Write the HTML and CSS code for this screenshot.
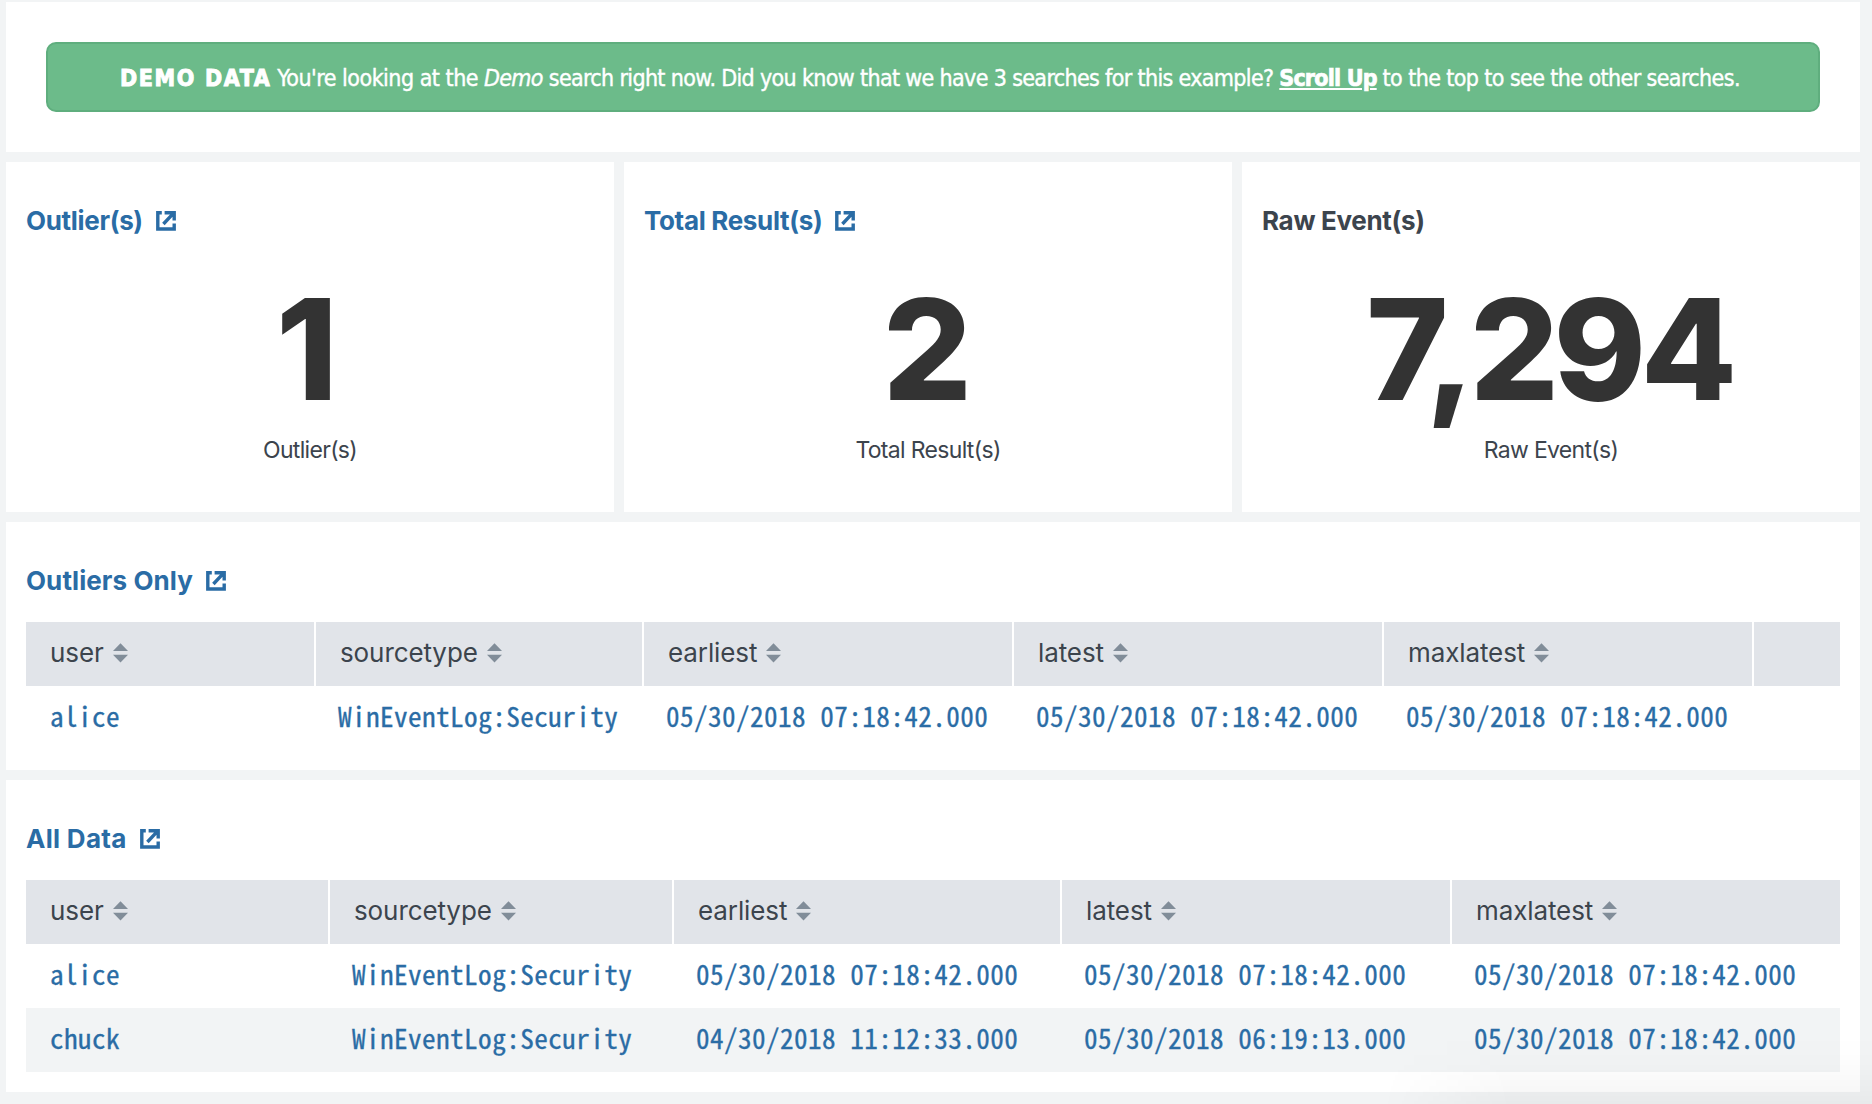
FILE: index.html
```html
<!DOCTYPE html>
<html lang="en">
<head>
<meta charset="utf-8">
<title>Outlier search results</title>
<link rel="stylesheet" href="styles.css">
</head>
<body>
<svg width="0" height="0" class="defs" aria-hidden="true">
  <symbol id="external" viewBox="0 0 20 20"><path d="M5.8 1.8H1.8V18H18.2V12.6M8.6 1.8H18.2V9.4M7.4 13L17.6 2.2" /></symbol>
  <symbol id="sort" viewBox="0 0 15 20"><path d="M7.5 0.3L15 8H0ZM0 11.8H15L7.5 19.6Z"/></symbol>
</svg>
<main class="dashboard">
  <section class="panel notice">
    <div class="banner"><p class="message"><strong class="tag">DEMO DATA</strong> <span class="intro">You're looking at the</span> <em>Demo</em> <span class="body">search right now. Did you know that we have 3 searches for this example?</span> <a class="scroll" href="#">Scroll Up</a> <span class="tail">to the top to see the other searches.</span></p></div>
  </section>
  <div class="stats">
    <section class="panel stat">
      <h2 class="title link"><span>Outlier(s)</span><svg class="external"><use href="#external"/></svg></h2>
      <div class="number narrow">1</div><div class="caption">Outlier(s)</div>
    </section>
    <section class="panel stat">
      <h2 class="title link"><span>Total Result(s)</span><svg class="external"><use href="#external"/></svg></h2>
      <div class="number">2</div><div class="caption">Total Result(s)</div>
    </section>
    <section class="panel stat">
      <h2 class="title"><span>Raw Event(s)</span></h2>
      <div class="number wide">7,294</div><div class="caption">Raw Event(s)</div>
    </section>
  </div>
  <section class="panel outliers">
    <h2 class="title link"><span>Outliers Only</span><svg class="external"><use href="#external"/></svg></h2>
    <div class="table">
      <div class="row head"><div>user<svg class="sort"><use href="#sort"/></svg></div><div>sourcetype<svg class="sort"><use href="#sort"/></svg></div><div>earliest<svg class="sort"><use href="#sort"/></svg></div><div>latest<svg class="sort"><use href="#sort"/></svg></div><div>maxlatest<svg class="sort"><use href="#sort"/></svg></div><div></div></div>
      <div class="row"><div>alice</div><div>WinEventLog:Security</div><div>05/30/2018 07:18:42.000</div><div>05/30/2018 07:18:42.000</div><div>05/30/2018 07:18:42.000</div><div></div></div>
    </div>
  </section>
  <section class="panel all">
    <h2 class="title link"><span>All Data</span><svg class="external"><use href="#external"/></svg></h2>
    <div class="table">
      <div class="row head"><div>user<svg class="sort"><use href="#sort"/></svg></div><div>sourcetype<svg class="sort"><use href="#sort"/></svg></div><div>earliest<svg class="sort"><use href="#sort"/></svg></div><div>latest<svg class="sort"><use href="#sort"/></svg></div><div>maxlatest<svg class="sort"><use href="#sort"/></svg></div></div>
      <div class="row"><div>alice</div><div>WinEventLog:Security</div><div>05/30/2018 07:18:42.000</div><div>05/30/2018 07:18:42.000</div><div>05/30/2018 07:18:42.000</div></div>
      <div class="row striped"><div>chuck</div><div>WinEventLog:Security</div><div>04/30/2018 11:12:33.000</div><div>05/30/2018 06:19:13.000</div><div>05/30/2018 07:18:42.000</div></div>
    </div>
  </section>
</main>
<div class="shade"></div>
</body>
</html>
```
FILE: styles.css
```css
* { box-sizing: border-box; }
html, body { height: 100%; overflow: hidden; }
body { margin: 0; background: #f2f4f5; color: #3c444d; font-family: Inter, sans-serif; }
.defs { display: block; width: 0; height: 0; position: absolute; }
.dashboard { display: grid; grid-template-rows: 150px 350px 248px 312px; gap: 10px; padding: 2px 12px 0 6px; }
.panel { background: #fff; padding: 0 20px; }
.notice { padding: 40px; }
.banner { height: 70px; border: 2px solid #5fae7e; border-radius: 10px; background: #6cbb8a; padding: 2px 0 0 72px; display: flex; align-items: center; }
.message { margin: 0; color: #fff; font: 23px/30px "DejaVu Sans Condensed", "DejaVu Sans", sans-serif; letter-spacing: -0.65px; white-space: nowrap; -webkit-text-stroke: 0.4px #fff; }
.tag { letter-spacing: 1.65px; -webkit-text-stroke-width: 0.9px; }
.intro { letter-spacing: -0.5px; }
.tail { letter-spacing: -0.6px; }
.scroll { color: inherit; font-weight: bold; letter-spacing: -0.8px; text-decoration: underline; text-decoration-thickness: 2px; text-underline-offset: 2px; -webkit-text-stroke-width: 0.7px; }
.stats { display: grid; grid-template-columns: 608px 608px 618px; gap: 10px; }
.title { margin: 0; padding-top: 42px; height: 100px; display: flex; align-items: flex-start; font-size: 26px; line-height: 34px; font-weight: 700; letter-spacing: -0.33px; }
.outliers .title { letter-spacing: 0.08px; }
.all .title { letter-spacing: 0.3px; }
.link { color: #2a6ca5; }
.external { width: 20px; height: 20px; margin: 7px 0 0 13px; fill: none; stroke: #2a6ca5; stroke-width: 3.4; }
.number { height: 172px; padding: 1px 7px 0 0; font-size: 140px; line-height: 172px; font-weight: 800; color: #333; text-align: center; letter-spacing: -6px; }
.narrow { padding-right: 12px; }
.wide { padding-right: 4px; letter-spacing: -5.4px; }
.caption { text-align: center; font-size: 23px; line-height: 32px; letter-spacing: -0.68px; }
.row { display: grid; height: 64px; color: #2a6ca5; font: 27.2px/58px "Noto Sans Mono CJK SC", "Liberation Mono", monospace; letter-spacing: 0.42px; white-space: nowrap; -webkit-text-stroke: 0.3px #2a6ca5; }
.row > div { padding-left: 24px; }
.head { background: #e1e4e9; color: #3c444d; font: 26px/34px Inter, sans-serif; letter-spacing: -0.1px; -webkit-text-stroke-width: 0; }
.head > div { height: 64px; display: flex; align-items: center; border-left: 2px solid #fff; padding: 0 0 2px 24px; }
.head > div:first-child { border-left: 0; }
.outliers .row { grid-template-columns: 288px 328px 370px 370px 370px 88px; }
.all .row { grid-template-columns: 302px 344px 388px 390px 390px; }
.striped { background: #f2f4f5; }
.sort { width: 15px; height: 20px; margin-left: 9px; fill: #818d99; }
.shade { position: absolute; right: 0; bottom: 0; width: 490px; height: 70px; background: linear-gradient(to bottom, transparent, rgba(0, 0, 0, .008) 40%, rgba(0, 0, 0, .04)); -webkit-mask-image: linear-gradient(to right, transparent, #000 130px); mask-image: linear-gradient(to right, transparent, #000 130px); pointer-events: none; }
```
